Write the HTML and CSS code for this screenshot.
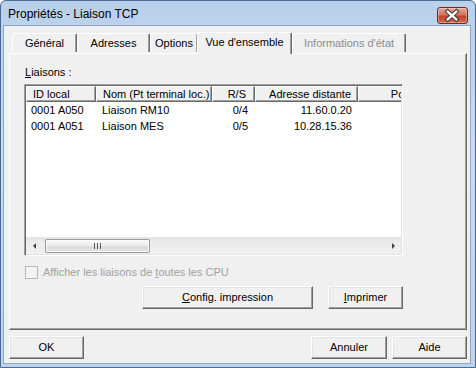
FILE: index.html
```html
<!DOCTYPE html>
<html lang="fr">
<head>
    <meta charset="UTF-8">
    <title>Propriétés - Liaison TCP</title>
    <link rel="stylesheet" href="styles.css">
</head>
<body>
    <div class="window">
        <div class="titlebar">
            <span class="title">Propriétés - Liaison TCP</span>
            <div class="close">
                <svg width="31" height="17" viewBox="0 0 31 17">
                    <path d="M11 4.5 L20 12.5 M20 4.5 L11 12.5" stroke="#3b3b3b" stroke-width="4.6" stroke-linecap="square" fill="none"/>
                    <path d="M11 4.5 L20 12.5 M20 4.5 L11 12.5" stroke="#ffffff" stroke-width="2.4" stroke-linecap="square" fill="none"/>
                </svg>
            </div>
        </div>

        <div class="client">
            <div class="tabs">
                <div class="tab tab-general">Général</div>
                <div class="tab tab-adresses">Adresses</div>
                <div class="tab tab-options">Options</div>
                <div class="tab tab-vue active">Vue d'ensemble</div>
                <div class="tab tab-infos disabled">Informations d'état</div>
            </div>

            <div class="panel">
                <div class="label"><u>L</u>iaisons :</div>

                <div class="listview">
                    <div class="lv-head">
                        <div class="hcell c-id">ID local</div>
                        <div class="hcell c-nom">Nom (Pt terminal loc.)</div>
                        <div class="hcell c-rs right">R/S</div>
                        <div class="hcell c-addr right">Adresse distante</div>
                        <div class="hcell c-port right">Port</div>
                    </div>
                    <div class="lv-body">
                        <div class="lv-row">
                            <div class="cell c-id">0001 A050</div>
                            <div class="cell c-nom">Liaison RM10</div>
                            <div class="cell c-rs right">0/4</div>
                            <div class="cell c-addr right">11.60.0.20</div>
                        </div>
                        <div class="lv-row">
                            <div class="cell c-id">0001 A051</div>
                            <div class="cell c-nom">Liaison MES</div>
                            <div class="cell c-rs right">0/5</div>
                            <div class="cell c-addr right">10.28.15.36</div>
                        </div>
                    </div>
                    <div class="hscroll">
                        <div class="arrow arrow-left"></div>
                        <div class="track">
                            <div class="thumb"><span class="grip"></span></div>
                        </div>
                        <div class="arrow arrow-right"></div>
                    </div>
                </div>

                <div class="check disabled">
                    <span class="box"></span>
                    <span>Afficher les liaisons de <u>t</u>outes les CPU</span>
                </div>

                <div class="panel-buttons">
                    <div class="btn btn-config"><u>C</u>onfig. impression</div>
                    <div class="btn btn-print"><u>I</u>mprimer</div>
                </div>
            </div>

            <div class="footer">
                <div class="btn btn-ok">OK</div>
                <div class="footer-right">
                    <div class="btn btn-cancel">Annuler</div>
                    <div class="btn btn-help">Aide</div>
                </div>
            </div>
        </div>
    </div>
</body>
</html>
```

FILE: styles.css
```css
* {
    margin: 0;
    padding: 0;
    box-sizing: border-box;
}

body {
    font-family: 'Liberation Sans', Arial, sans-serif;
    font-size: 11px;
    color: #000;
    background: #ffffff;
}

u {
    text-decoration: underline;
    text-underline-offset: 1px;
}

.window {
    width: 476px;
    height: 368px;
    background: linear-gradient(180deg, #b9d0ea 0%, #c9dcf1 40%, #bcd5ee 100%);
    border: 1px solid #4a6a92;
    border-radius: 6px 6px 0 0;
    padding: 0 4px 3px 2px;
    display: flex;
    flex-direction: column;
}

.titlebar {
    height: 24px;
    display: flex;
    align-items: center;
    justify-content: space-between;
    padding: 0 4px 1px 5px;
}

.title {
    font-size: 12px;
    color: #000;
    padding-top: 3px;
}

.close {
    width: 31px;
    height: 17px;
    margin-top: 6px;
    margin-right: -1px;
    border: 1px solid #6e2a20;
    border-radius: 3px;
    background: linear-gradient(180deg, #eaa693 0%, #d8735a 45%, #c2412a 55%, #d26c4c 100%);
    box-shadow: inset 0 0 0 1px rgba(255, 255, 255, 0.35);
    display: flex;
}

.close svg {
    margin: -1px 0 0 -1px;
}

.client {
    flex: 1;
    background: #f0f0f0;
    border: 1px solid #8ea9c8;
    padding: 5px 4px 0 5px;
}

/* onglets */
.tabs {
    display: flex;
    align-items: flex-end;
    height: 22px;
    padding-left: 3px;
    position: relative;
    z-index: 1;
}

.tab {
    height: 19px;
    background: #f0f0f0;
    border-top: 1px solid #ffffff;
    border-left: 1px solid #ffffff;
    border-right: 1px solid #696969;
    box-shadow: inset -1px 0 #a0a0a0;
    border-radius: 2px 2px 0 0;
    text-align: center;
    line-height: 19px;
    white-space: nowrap;
    margin-bottom: 1px;
}

.tab-general { width: 65px; }
.tab-adresses { width: 73px; }
.tab-options { width: 48px; }

.tab-vue {
    width: 95px;
    height: 22px;
    line-height: 19px;
    margin-bottom: -1px;
    margin-left: -1px;
}

.tab-infos {
    width: 114px;
}

.tab.disabled {
    color: #8d8d8d;
}

.panel {
    width: 458px;
    height: 277px;
    border-top: 1px solid #ffffff;
    border-left: 1px solid #ffffff;
    border-right: 1px solid #696969;
    border-bottom: 1px solid #696969;
    box-shadow: inset -1px -1px #a0a0a0;
    padding: 12px 0 0 14px;
}

.label {
    line-height: 13px;
    margin-left: 1px;
    margin-bottom: 5px;
}

/* liste */
.listview {
    width: 379px;
    height: 172px;
    background: #ffffff;
    border-top: 1px solid #a0a0a0;
    border-left: 1px solid #a0a0a0;
    border-right: 1px solid #ffffff;
    border-bottom: 1px solid #ffffff;
    box-shadow: inset 1px 1px #696969, inset -1px -1px #e3e3e3;
    padding: 1px;
    display: flex;
    flex-direction: column;
    overflow: hidden;
}

.lv-head {
    display: flex;
    height: 16px;
    flex-shrink: 0;
    overflow: hidden;
}

.hcell {
    flex-shrink: 0;
    height: 16px;
    line-height: 14px;
    background: #f0f0f0;
    border-top: 1px solid #ffffff;
    border-left: 1px solid #ffffff;
    border-right: 1px solid #696969;
    border-bottom: 1px solid #696969;
    box-shadow: inset -1px -1px #a0a0a0;
    padding: 0 6px;
    white-space: nowrap;
    overflow: hidden;
}

.c-id { width: 70px; }
.c-nom { width: 116px; }
.c-rs { width: 43px; }
.c-addr { width: 103px; }
.c-port { width: 60px; }

.right {
    text-align: right;
}

.hcell.c-rs { padding-right: 8px; }

.lv-body {
    flex: 1;
}

.lv-row {
    display: flex;
    height: 16px;
    line-height: 16px;
}

.cell {
    flex-shrink: 0;
    padding: 0 6px 0 5px;
    white-space: nowrap;
}

.cell.c-nom { padding-left: 6px; }
.cell.c-rs { padding-right: 7px; }

/* barre de defilement */
.hscroll {
    height: 17px;
    display: flex;
    flex-shrink: 0;
    background: linear-gradient(180deg, #e3e3e3 0%, #ececec 30%, #f0f0f0 100%);
    border-top: 1px solid #e6e6e6;
}

.arrow {
    width: 17px;
    position: relative;
}

.arrow::after {
    content: "";
    position: absolute;
    top: 5px;
    border-top: 3px solid transparent;
    border-bottom: 3px solid transparent;
}

.arrow-left::after {
    left: 7px;
    border-right: 3px solid #404040;
}

.arrow-right::after {
    left: 8px;
    border-left: 3px solid #404040;
}

.track {
    flex: 1;
    padding: 1px 0 1px 2px;
}

.thumb {
    width: 105px;
    height: 14px;
    border: 1px solid #9a9a9a;
    border-radius: 2px;
    background: linear-gradient(180deg, #f7f7f7 0%, #ececec 50%, #dcdcdc 51%, #e2e2e2 100%);
    box-shadow: inset 0 0 0 1px #fbfbfb;
    display: flex;
    align-items: center;
    justify-content: center;
}

.grip {
    width: 7px;
    height: 6px;
    background: repeating-linear-gradient(90deg, #5a5a5a 0 1px, transparent 1px 3px);
}

/* case a cocher */
.check {
    display: flex;
    align-items: center;
    gap: 5px;
    margin: 10px 0 0 1px;
    height: 13px;
    line-height: 13px;
}

.check.disabled {
    color: #a0a0a0;
}

.box {
    width: 13px;
    height: 13px;
    border: 1px solid #b8b8b8;
    background: #f4f4f4;
}

/* boutons */
.btn {
    height: 23px;
    background: #f0f0f0;
    border-top: 1px solid #ffffff;
    border-left: 1px solid #ffffff;
    border-right: 1px solid #696969;
    border-bottom: 1px solid #696969;
    box-shadow: inset -1px -1px #a0a0a0, inset 1px 1px #e3e3e3;
    text-align: center;
    line-height: 20px;
    white-space: nowrap;
}

.panel-buttons {
    width: 379px;
    display: flex;
    justify-content: flex-end;
    gap: 15px;
    margin-top: 7px;
}

.btn-config { width: 171px; }
.btn-print { width: 75px; }

.footer {
    display: flex;
    justify-content: space-between;
    margin-top: 6px;
    width: 458px;
}

.footer-right {
    display: flex;
    gap: 5px;
}

.btn-ok { width: 75px; }
.btn-cancel { width: 76px; }
.btn-help { width: 75px; }
```
